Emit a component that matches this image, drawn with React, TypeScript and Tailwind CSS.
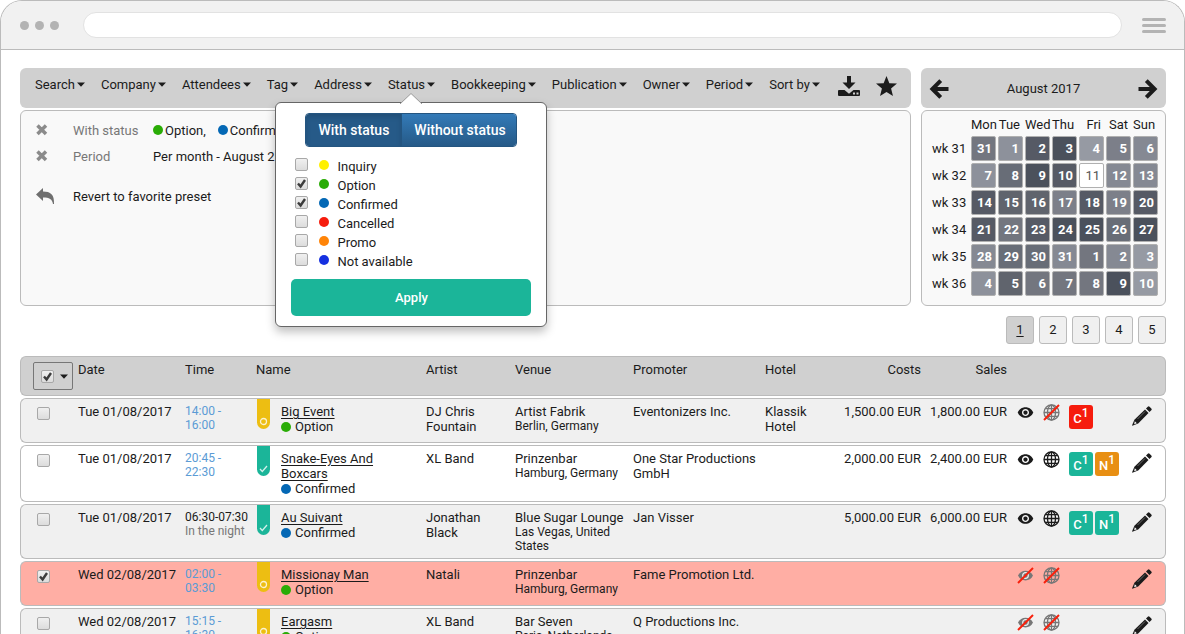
import React, { useState } from "react";
import { MdVisibility } from "react-icons/md";

const statuses = [
  { label: "Inquiry", dot: "bg-[#fff000]" },
  { label: "Option", dot: "bg-[#2aac06]" },
  { label: "Confirmed", dot: "bg-[#0468b5]" },
  { label: "Cancelled", dot: "bg-[#f61c0d]" },
  { label: "Promo", dot: "bg-[#ff8408]" },
  { label: "Not available", dot: "bg-[#1530e0]" },
];

const days = ["Mon", "Tue", "Wed", "Thu", "Fri", "Sat", "Sun"];

// busy level per day, 0 = quiet, 8 = fully booked
const shades = [
  "bg-[#969aa3]",
  "bg-[#8d919b]",
  "bg-[#858993]",
  "bg-[#7c7f89]",
  "bg-[#73767f]",
  "bg-[#686d77]",
  "bg-[#60646d]",
  "bg-[#565a65]",
  "bg-[#4b515c]",
];

const weeks = [
  { wk: 31, dates: [31, 1, 2, 3, 4, 5, 6], load: [4, 1, 7, 8, 0, 3, 2] },
  { wk: 32, dates: [7, 8, 9, 10, 11, 12, 13], load: [1, 5, 8, 7, 0, 2, 2] },
  { wk: 33, dates: [14, 15, 16, 17, 18, 19, 20], load: [7, 6, 6, 3, 7, 3, 7] },
  { wk: 34, dates: [21, 22, 23, 24, 25, 26, 27], load: [7, 4, 7, 8, 8, 5, 8] },
  { wk: 35, dates: [28, 29, 30, 31, 1, 2, 3], load: [2, 5, 5, 2, 4, 2, 0] },
  { wk: 36, dates: [4, 5, 6, 7, 8, 9, 10], load: [1, 6, 4, 4, 4, 8, 0] },
];

type Badge = { letter: string; color: string };

type Booking = {
  date: string;
  time: string[];
  night?: boolean;
  name: string;
  confirmed: boolean;
  artist: string;
  venue: string;
  city: string;
  promoter: string;
  hotel?: string;
  costs?: string;
  sales?: string;
  visible: boolean;
  online: boolean;
  badges: Badge[];
  selected?: boolean;
  white?: boolean;
};

const teal = "bg-[#1bb599]";

const bookings: Booking[] = [
  {
    date: "Tue 01/08/2017", time: ["14:00 -", "16:00"], name: "Big Event", confirmed: false,
    artist: "DJ Chris Fountain", venue: "Artist Fabrik", city: "Berlin, Germany",
    promoter: "Eventonizers Inc.", hotel: "Klassik Hotel", costs: "1,500.00 EUR", sales: "1,800.00 EUR",
    visible: true, online: false, badges: [{ letter: "C", color: "bg-[#f61c0d]" }],
  },
  {
    date: "Tue 01/08/2017", time: ["20:45 -", "22:30"], name: "Snake-Eyes And Boxcars", confirmed: true,
    artist: "XL Band", venue: "Prinzenbar", city: "Hamburg, Germany",
    promoter: "One Star Productions GmbH", costs: "2,000.00 EUR", sales: "2,400.00 EUR",
    visible: true, online: true, white: true,
    badges: [{ letter: "C", color: teal }, { letter: "N", color: "bg-[#e88f13]" }],
  },
  {
    date: "Tue 01/08/2017", time: ["06:30-07:30", "In the night"], night: true, name: "Au Suivant", confirmed: true,
    artist: "Jonathan Black", venue: "Blue Sugar Lounge", city: "Las Vegas, United States",
    promoter: "Jan Visser", costs: "5,000.00 EUR", sales: "6,000.00 EUR",
    visible: true, online: true,
    badges: [{ letter: "C", color: teal }, { letter: "N", color: teal }],
  },
  {
    date: "Wed 02/08/2017", time: ["02:00 -", "03:30"], name: "Missionay Man", confirmed: false,
    artist: "Natali", venue: "Prinzenbar", city: "Hamburg, Germany",
    promoter: "Fame Promotion Ltd.", visible: false, online: false, badges: [], selected: true,
  },
  {
    date: "Wed 02/08/2017", time: ["15:15 -", "16:30"], name: "Eargasm", confirmed: false,
    artist: "XL Band", venue: "Bar Seven", city: "Paris, Netherlands",
    promoter: "Q Productions Inc.", visible: false, online: false, badges: [],
  },
];

function Caret() {
  return (
    <svg viewBox="0 0 8 5" className="h-[5px] w-2 shrink-0" fill="currentColor">
      <path d="M0 0.5h8L4 4.8z" />
    </svg>
  );
}

function CheckBox({ label, id, defaultChecked }: { label?: string; id?: string; defaultChecked?: boolean }) {
  return (
    <span className="relative inline-block size-[13px] shrink-0">
      <input
        type="checkbox"
        id={id}
        aria-label={label}
        defaultChecked={defaultChecked}
        className="peer block size-[13px] appearance-none rounded-[2px] border border-[#a8a8a8] bg-linear-to-b from-[#f0f0f0] to-[#dcdcdc]"
      />
      <svg viewBox="0 0 13 13" className="pointer-events-none absolute inset-0 hidden size-[13px] peer-checked:block">
        <path d="M3 6.500l2.600 3L10 3" fill="none" stroke="#3c3c3c" strokeWidth="2.400" />
      </svg>
    </span>
  );
}

function DownloadIcon() {
  return (
    <svg viewBox="0 0 22 20" className="h-5 w-[22px]">
      <path d="M9 0h4v6.500h4.500L11 13 4.500 6.500H9z" fill="currentColor" />
      <path d="M1 14h5.500l4.500 3.800 4.500-3.800H21q1 0 1 1v4q0 1-1 1H1q-1 0-1-1v-4q0-1 1-1z" fill="currentColor" />
      <path d="M15 16.500h2v2h-2zM18.500 16.500h2v2h-2z" fill="#d0d0d0" />
    </svg>
  );
}

function StarIcon() {
  return (
    <svg viewBox="0 0 22 21" className="h-5 w-[21px]" fill="currentColor">
      <path d="M11 0l3 7.500 8 .5-6.200 5.200 2 7.800L11 16.700 4.200 21l2-7.800L0 8l8-.5z" />
    </svg>
  );
}

function ArrowIcon({ right }: { right?: boolean }) {
  return (
    <svg viewBox="0 0 20 20" className="size-5" fill="none" stroke="currentColor" strokeWidth="4">
      {right ? <path d="M0.500 10H16M8.300 1.700L16.600 10l-8.300 8.300" /> : <path d="M19.500 10H4M11.700 1.700L3.400 10l8.300 8.300" />}
    </svg>
  );
}

function RemoveIcon() {
  return (
    <svg viewBox="0 0 12 12" className="size-3" fill="none" stroke="currentColor" strokeWidth="3.500">
      <path d="M1.500 1.500l8.500 8.500M10 1.500L1.500 10" />
    </svg>
  );
}

function RevertIcon() {
  return (
    <svg viewBox="0 0 19 16" className="h-4 w-[19px] text-[#6f6f6f]" fill="currentColor">
      <path d="M7 0v3.500c7.500 0 11.500 3 11 12.500h-1c-.8-5-3.500-6.500-10-6.500V13L0 6.500z" />
    </svg>
  );
}

function Slash() {
  return <path d="M1 16L16 1" stroke="#f8200c" strokeWidth="2" fill="none" />;
}

function GlobeIcon({ off }: { off: boolean }) {
  return (
    <svg viewBox="0 0 17 17" className="size-[17px] shrink-0" fill="none">
      <g stroke={off ? "#777" : "#1b1b1b"} strokeWidth="1.300">
        <circle cx="8.500" cy="8.500" r="7.500" />
        <ellipse cx="8.500" cy="8.500" rx="4" ry="7.500" />
        <path d="M8.500 1v15M1 8.500h15M2.300 4.700h12.400M2.300 12.300h12.400" />
      </g>
      {off && <Slash />}
    </svg>
  );
}

function EyeIcon({ off }: { off: boolean }) {
  if (!off) return <MdVisibility className="size-[17px] shrink-0" />;
  return (
    <svg viewBox="0 0 17 17" className="size-[17px] shrink-0">
      <path d="M1 8.500C4 2 13 2 16 8.500 13 15 4 15 1 8.500z" fill="#777" />
      <circle cx="8.500" cy="8.500" r="2.800" fill="none" stroke="#f0f0f0" strokeWidth="1.200" />
      <Slash />
    </svg>
  );
}

function PencilIcon() {
  return (
    <svg viewBox="0 0 20 20" className="size-5" fill="currentColor">
      <path d="M14 2.500L15.800.7q.9-.9 1.800 0l1.700 1.700q.9.9 0 1.800L17.500 6z" />
      <path d="M13 3.500L16.500 7 6.200 17.600.3 19.700q-.3 0-.2-.4L2.400 13.800z" />
      <path d="M2.800 15.300l2 2-2.600.9z" fill="#fff" />
      <path d="M5.500 13l7.500-7.500" stroke="#8a8a8a" strokeWidth=".7" />
    </svg>
  );
}

function Ribbon({ confirmed }: { confirmed: boolean }) {
  return (
    <span className={`flex h-[30px] w-[13px] shrink-0 items-end justify-center rounded-b-full pb-[3px] text-white/80 ${confirmed ? "bg-[#1bb599]" : "bg-[#edbe12]"}`}>
      <svg viewBox="0 0 9 9" className="size-[9px]" fill="none" stroke="currentColor" strokeWidth="1.300">
        {confirmed ? <path d="M1 5l2.300 2.500L8 2" /> : <circle cx="4.500" cy="4.500" r="3" />}
      </svg>
    </span>
  );
}

function StatusPopup() {
  const [withStatus, setWithStatus] = useState(true);
  const tab = "h-full border-[#245580] px-3 text-[14px] font-medium whitespace-nowrap text-white";

  return (
    <div className="absolute top-[27px] left-1/2 z-10 w-[272px] -translate-x-1/2 rounded-md border border-[#666] bg-white px-[15px] py-[10px] shadow-[0_5px_10px_rgba(0,0,0,0.25)]">
      <svg viewBox="0 0 22 11" className="absolute -top-[10px] left-1/2 h-[11px] w-[22px] -translate-x-1/2">
        <path d="M0 11L11 0.500 22 11" fill="#fff" stroke="#999" />
      </svg>
      <div className="mx-auto flex h-[34px] w-[212px] overflow-hidden rounded-[4px] border border-[#245580]">
        <button
          type="button"
          onClick={() => setWithStatus(true)}
          className={`${tab} ${withStatus ? "bg-[#265a88] shadow-[inset_0_3px_5px_rgba(0,0,0,0.125)]" : "bg-linear-to-b from-[#337ab7] to-[#265a88]"}`}
        >
          With status
        </button>
        <button
          type="button"
          onClick={() => setWithStatus(false)}
          className={`${tab} flex-1 border-l ${withStatus ? "bg-linear-to-b from-[#337ab7] to-[#265a88]" : "bg-[#265a88]"}`}
        >
          Without status
        </button>
      </div>
      <ul className="mt-[11px] ml-1">
        {statuses.map((s) => (
          <li key={s.label} className="flex h-[19px] items-start">
            <CheckBox id={`status-${s.label}`} defaultChecked={s.label === "Option" || s.label === "Confirmed"} />
            <span className={`mt-[2px] ml-[11px] size-[10px] rounded-full ${s.dot}`} />
            <label htmlFor={`status-${s.label}`} className="ml-2 leading-[18px]">{s.label}</label>
          </li>
        ))}
      </ul>
      <button type="button" className="mt-[7px] h-[37px] w-full rounded-[5px] bg-[#1bb599] font-medium text-white">
        Apply
      </button>
    </div>
  );
}

function FilterBar() {
  const items = ["Search", "Company", "Attendees", "Tag", "Address", "Status", "Bookkeeping", "Publication", "Owner", "Period", "Sort by"];

  return (
    <nav className="flex h-10 items-start rounded-md bg-[#d0d0d0] pr-[14px] pl-[15px]">
      <ul className="flex gap-4 pt-[7px]">
        {items.map((item) => (
          <li key={item} className="relative">
            <button type="button" className="flex h-[18px] items-center gap-[2px] whitespace-nowrap">
              {item}
              <Caret />
            </button>
            {item === "Status" && <StatusPopup />}
          </li>
        ))}
      </ul>
      <div className="ml-auto flex gap-4 pt-2">
        <button type="button" aria-label="Export"><DownloadIcon /></button>
        <button type="button" aria-label="Favorite"><StarIcon /></button>
      </div>
    </nav>
  );
}

function ActiveFilters() {
  return (
    <div className="mt-[2px] h-[196px] rounded-md border border-[#bbb] bg-[#f9f9f9] px-[15px] pt-[6px]">
      <div className="flex h-[26px] items-center">
        <button type="button" aria-label="Remove status filter" className="w-[37px] text-[#8b8b8b]"><RemoveIcon /></button>
        <span className="w-20 text-[#777]">With status</span>
        <span className="size-[10px] rounded-full bg-[#2aac06]" />
        <span className="ml-[2px]">Option,</span>
        <span className="ml-3 size-[10px] rounded-full bg-[#0468b5]" />
        <span className="ml-[2px]">Confirmed</span>
      </div>
      <div className="flex h-[26px] items-center">
        <button type="button" aria-label="Remove period filter" className="w-[37px] text-[#8b8b8b]"><RemoveIcon /></button>
        <span className="w-20 text-[#777]">Period</span>
        <span>Per month - August 2017</span>
      </div>
      <button type="button" className="mt-[14px] flex h-[26px] items-center">
        <span className="w-[37px]"><RevertIcon /></span>
        Revert to favorite preset
      </button>
    </div>
  );
}

function Calendar() {
  return (
    <section className="w-[245px] shrink-0">
      <header className="flex h-10 items-center justify-between rounded-md bg-[#d0d0d0] px-2">
        <button type="button" aria-label="Previous month" className="pt-[2px]"><ArrowIcon /></button>
        <h2>August 2017</h2>
        <button type="button" aria-label="Next month" className="pt-[2px]"><ArrowIcon right /></button>
      </header>
      <div className="mt-[2px] h-[196px] rounded-md border border-[#bbb] bg-[#f9f9f9] pt-[2px] pr-[5px] pl-[8px]">
        <table className="w-full table-fixed border-separate border-spacing-[2px]">
          <thead>
            <tr className="h-[19px]">
              <th className="w-[37px]" />
              {days.map((d) => (
                <th key={d} className="pr-[3px] text-right font-normal whitespace-nowrap">{d}</th>
              ))}
            </tr>
          </thead>
          <tbody>
            {weeks.map((w) => (
              <tr key={w.wk} className="h-[25px]">
                <th className="pr-1 text-right font-normal whitespace-nowrap">wk {w.wk}</th>
                {w.dates.map((d, i) => (
                  <td
                    key={d}
                    className={`rounded-[2px] border border-[#b0b0b0] pr-[3px] text-right ${d === 11 ? "bg-white text-[#555]" : `${shades[w.load[i]]} font-bold text-white`}`}
                  >
                    {d}
                  </td>
                ))}
              </tr>
            ))}
          </tbody>
        </table>
      </div>
    </section>
  );
}

function Pager() {
  return (
    <nav className="mt-[10px] flex justify-end gap-[5px]">
      {[1, 2, 3, 4, 5].map((p) => (
        <a
          key={p}
          href={`#page-${p}`}
          className={`flex size-7 items-center justify-center rounded-[3px] border border-[#bbb] pb-px ${p === 1 ? "bg-[#d0d0d0] underline underline-offset-2" : "bg-[#f0f0f0]"}`}
        >
          {p}
        </a>
      ))}
    </nav>
  );
}

function BookingRow({ booking: b }: { booking: Booking }) {
  const bg = b.selected ? "bg-[#ffaea4]" : b.white ? "bg-white" : "bg-[#f0f0f0]";
  const cell = `border-y border-[#bbb] py-[5px] ${bg}`;

  return (
    <tr className="h-[45px] align-top">
      <td className={`${cell} rounded-l-md border-l pl-4`}>
        <div className="flex pt-[3px]"><CheckBox label={`Select ${b.name}`} defaultChecked={b.selected} /></div>
      </td>
      <td className={`${cell} whitespace-nowrap`}>{b.date}</td>
      <td className={`${cell} text-[12px] leading-[14px]`}>
        <div className={b.night ? "" : "text-[#5b9bd5]"}>{b.time[0]}</div>
        <div className={b.night ? "text-[#777]" : "text-[#5b9bd5]"}>{b.time[1]}</div>
      </td>
      <td className={`border-y border-[#bbb] ${bg}`}>
        <div className="flex pl-px">
          <Ribbon confirmed={b.confirmed} />
          <div className="ml-[11px] w-28 py-[5px]">
            <a href="#booking" className="underline underline-offset-2">{b.name}</a>
            <div className="flex items-center">
              <span className={`mr-1 size-[10px] rounded-full ${b.confirmed ? "bg-[#0468b5]" : "bg-[#2aac06]"}`} />
              {b.confirmed ? "Confirmed" : "Option"}
            </div>
          </div>
        </div>
      </td>
      <td className={`${cell} pr-6`}>{b.artist}</td>
      <td className={cell}>
        <div className="whitespace-nowrap">{b.venue}</div>
        <div className="pr-3 text-[12px] leading-[14px]">{b.city}</div>
      </td>
      <td className={`${cell} pr-1`}>{b.promoter}</td>
      <td className={`${cell} pr-6`}>{b.hotel}</td>
      <td className={`${cell} text-right whitespace-nowrap`}>{b.costs}</td>
      <td className={`${cell} text-right whitespace-nowrap`}>{b.sales}</td>
      <td className={`${cell} rounded-r-md border-r pr-[13px] pl-[10px]`}>
        <div className="flex items-start">
          <EyeIcon off={!b.visible} />
          <span className="ml-[9px]"><GlobeIcon off={!b.online} /></span>
          <div className="ml-[9px] flex gap-[2px] pt-px">
            {b.badges.map((badge) => (
              <span key={badge.letter} className={`flex size-6 items-center justify-center rounded-[3px] font-medium text-white ${badge.color}`}>
                <span className="pt-[3px]">{badge.letter}</span>
                <span className="pb-2 text-[12px]">1</span>
              </span>
            ))}
          </div>
          <button type="button" aria-label={`Edit ${b.name}`} className="ml-auto pt-[2px]"><PencilIcon /></button>
        </div>
      </td>
    </tr>
  );
}

function BookingTable() {
  const head = "border-y border-[#bbb] bg-[#d0d0d0] pt-[5px] font-normal";

  return (
    <table className="mt-[10px] w-full table-fixed border-separate border-spacing-x-0 border-spacing-y-[2px] text-left">
      <colgroup>
        <col className="w-[58px]" />
        <col className="w-[107px]" />
        <col className="w-[71px]" />
        <col className="w-[170px]" />
        <col className="w-[89px]" />
        <col className="w-[118px]" />
        <col />
        <col className="w-[70px]" />
        <col className="w-[86px]" />
        <col className="w-[86px]" />
        <col className="w-[159px]" />
      </colgroup>
      <thead>
        <tr className="h-10 align-top">
          <th className={`${head} rounded-l-md border-l pl-3`}>
            <div className="flex h-7 w-10 items-center gap-[6px] rounded-[2px] border border-[#777] pl-[7px]">
              <CheckBox label="Select all" defaultChecked />
              <Caret />
            </div>
          </th>
          <th className={head}>Date</th>
          <th className={head}>Time</th>
          <th className={head}>Name</th>
          <th className={head}>Artist</th>
          <th className={head}>Venue</th>
          <th className={head}>Promoter</th>
          <th className={head}>Hotel</th>
          <th className={`${head} text-right`}>Costs</th>
          <th className={`${head} text-right`}>Sales</th>
          <th className={`${head} rounded-r-md border-r`} />
        </tr>
      </thead>
      <tbody>
        {bookings.map((b, i) => (
          <BookingRow key={i} booking={b} />
        ))}
      </tbody>
    </table>
  );
}

export default function App() {
  return (
    <div className="h-screen overflow-hidden bg-white font-[Roboto,sans-serif] text-[13px] leading-[15px] text-[#1b1b1b]">
      <div className="min-h-full rounded-t-[22px] border border-b-0 border-[#bbb]">
        {/* Window chrome */}
        <div className="flex h-[49px] items-center rounded-t-[21px] border-b border-[#bbb] bg-[#f1f1f1] pr-[18px] pl-[19px]">
          <div className="flex gap-[6px]">
            <span className="size-[9px] rounded-full bg-[#b3b3b3]" />
            <span className="size-[9px] rounded-full bg-[#b3b3b3]" />
            <span className="size-[9px] rounded-full bg-[#b3b3b3]" />
          </div>
          <input aria-label="Address" className="mr-5 ml-6 h-[26px] min-w-0 flex-1 rounded-full border border-[#e2e2e2] bg-white px-4 outline-none" />
          <button type="button" aria-label="Menu" className="flex w-6 flex-col gap-[3px]">
            <span className="h-[3px] rounded-full bg-[#b3b3b3]" />
            <span className="h-[3px] rounded-full bg-[#b3b3b3]" />
            <span className="h-[3px] rounded-full bg-[#b3b3b3]" />
          </button>
        </div>

        <main className="pt-[18px] pr-[18px] pl-[19px]">
          <div className="flex gap-[10px]">
            <section className="min-w-0 flex-1">
              <FilterBar />
              <ActiveFilters />
            </section>
            <Calendar />
          </div>
          <Pager />
          <BookingTable />
        </main>
      </div>
    </div>
  );
}
